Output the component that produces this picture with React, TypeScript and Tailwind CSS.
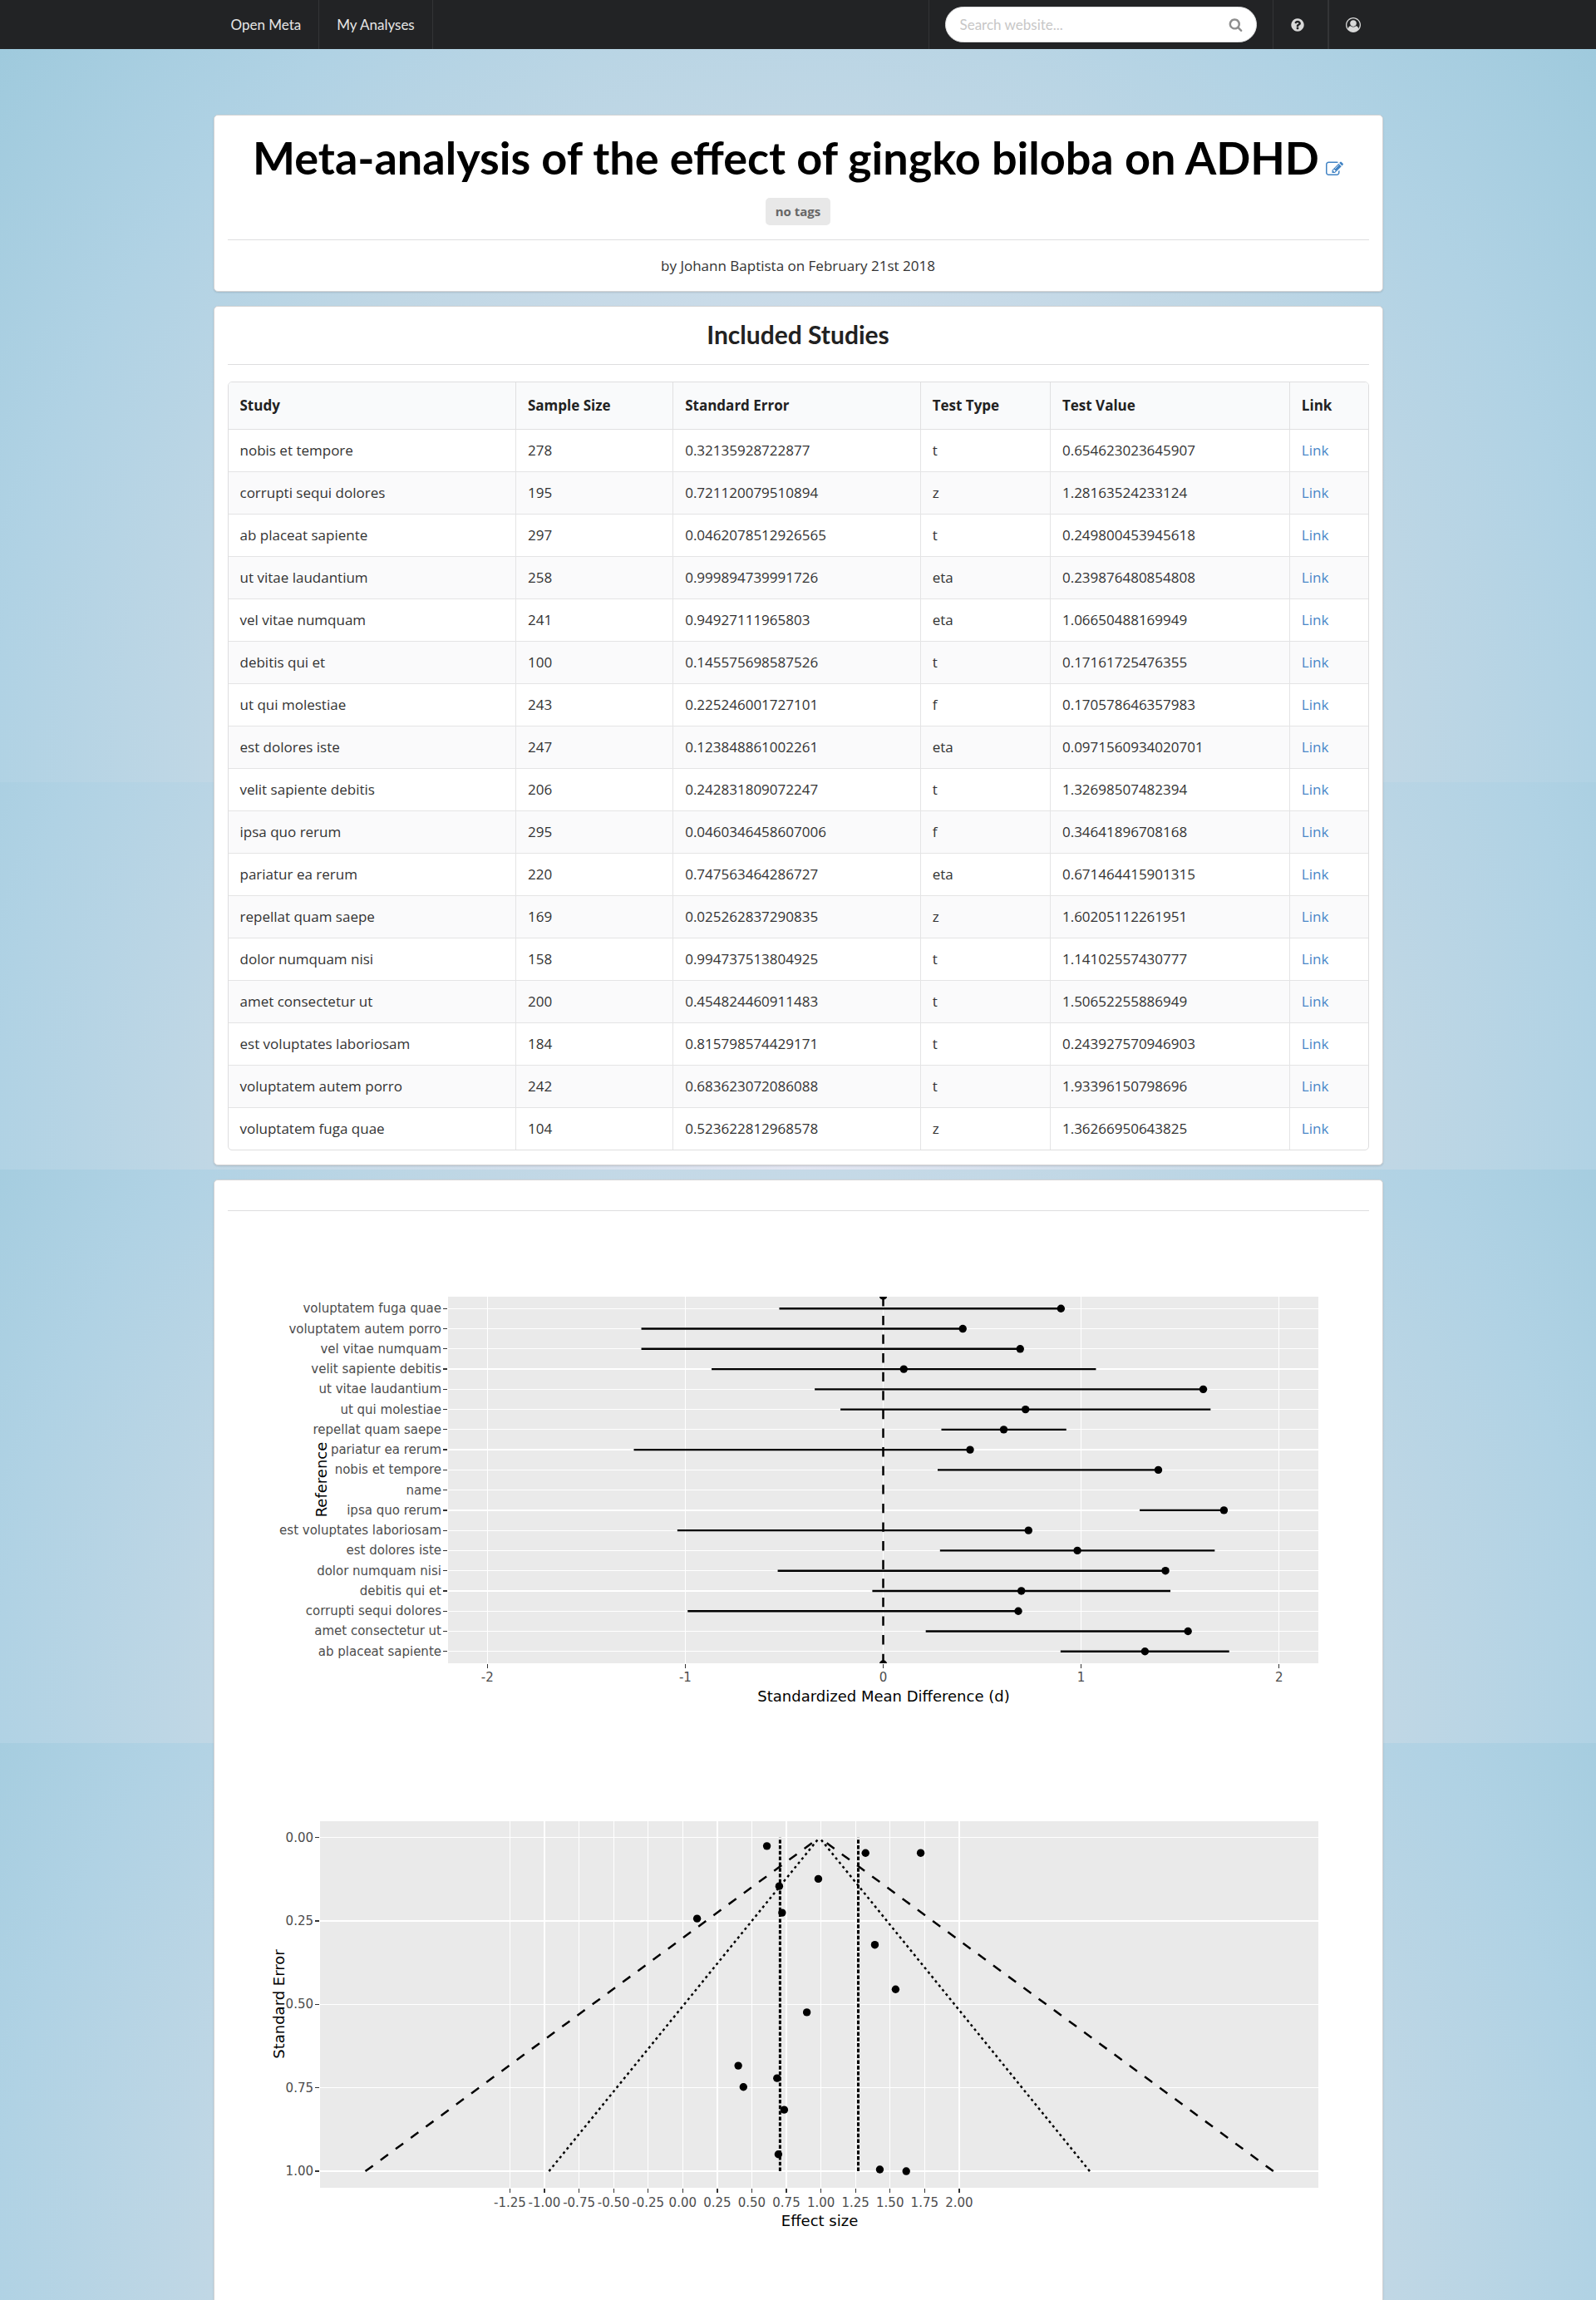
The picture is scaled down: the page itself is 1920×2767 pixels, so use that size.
import React from "react";

type Study = {
  name: string;
  size: number;
  error: string;
  type: string;
  value: string;
  /** Effect size */
  d: number;
  /** Bounds of the confidence interval drawn in the forest plot */
  lo: number;
  hi?: number;
};

const studies: Study[] = [
  { name: "nobis et tempore", size: 278, error: "0.32135928722877", type: "t", value: "0.654623023645907", d: 1.39, lo: 0.275 },
  { name: "corrupti sequi dolores", size: 195, error: "0.721120079510894", type: "z", value: "1.28163524233124", d: 0.6825, lo: -0.988 },
  { name: "ab placeat sapiente", size: 297, error: "0.0462078512926565", type: "t", value: "0.249800453945618", d: 1.3225, lo: 0.896, hi: 1.748 },
  { name: "ut vitae laudantium", size: 258, error: "0.999894739991726", type: "eta", value: "0.239876480854808", d: 1.617, lo: -0.346 },
  { name: "vel vitae numquam", size: 241, error: "0.94927111965803", type: "eta", value: "1.06650488169949", d: 0.692, lo: -1.222 },
  { name: "debitis qui et", size: 100, error: "0.145575698587526", type: "t", value: "0.17161725476355", d: 0.698, lo: -0.055, hi: 1.451 },
  { name: "ut qui molestiae", size: 243, error: "0.225246001727101", type: "f", value: "0.170578646357983", d: 0.719, lo: -0.216, hi: 1.654 },
  { name: "est dolores iste", size: 247, error: "0.123848861002261", type: "eta", value: "0.0971560934020701", d: 0.981, lo: 0.287, hi: 1.675 },
  { name: "velit sapiente debitis", size: 206, error: "0.242831809072247", type: "t", value: "1.32698507482394", d: 0.104, lo: -0.867, hi: 1.075 },
  { name: "ipsa quo rerum", size: 295, error: "0.0460346458607006", type: "f", value: "0.34641896708168", d: 1.7215, lo: 1.296 },
  { name: "pariatur ea rerum", size: 220, error: "0.747563464286727", type: "eta", value: "0.671464415901315", d: 0.439, lo: -1.26 },
  { name: "repellat quam saepe", size: 169, error: "0.025262837290835", type: "z", value: "1.60205112261951", d: 0.609, lo: 0.294, hi: 0.925 },
  { name: "dolor numquam nisi", size: 158, error: "0.994737513804925", type: "t", value: "1.14102557430777", d: 1.426, lo: -0.533 },
  { name: "amet consectetur ut", size: 200, error: "0.454824460911483", type: "t", value: "1.50652255886949", d: 1.54, lo: 0.215 },
  { name: "est voluptates laboriosam", size: 184, error: "0.815798574429171", type: "t", value: "0.243927570946903", d: 0.734, lo: -1.04 },
  { name: "voluptatem autem porro", size: 242, error: "0.683623072086088", type: "t", value: "1.93396150798696", d: 0.402, lo: -1.222 },
  { name: "voluptatem fuga quae", size: 104, error: "0.523622812968578", type: "z", value: "1.36266950643825", d: 0.898, lo: -0.525 },
];

const columns = [
  { label: "Study", width: "w-[25.2%]" },
  { label: "Sample Size", width: "w-[13.8%]" },
  { label: "Standard Error", width: "w-[21.7%]" },
  { label: "Test Type", width: "w-[11.4%]" },
  { label: "Test Value", width: "w-[21%]" },
  { label: "Link", width: "w-[6.9%]" },
];

function Glyph({ d, className }: { d: string; className: string }) {
  return (
    <svg viewBox="0 0 1792 1792" fill="currentColor" aria-hidden="true" className={className}>
      <path d={d} />
    </svg>
  );
}

const EDIT =
  "M888 1184l116-116-152-152-116 116v56h96v96h56zm440-720q-16-16-33 1l-350 350q-17 17-1 33t33-1l350-350q17-17 1-33zm80 594v190q0 119-84.5 203.5t-203.5 84.5h-832q-119 0-203.5-84.5t-84.5-203.5v-832q0-119 84.5-203.5t203.5-84.5h832q63 0 117 25 15 7 18 23 3 17-9 29l-49 49q-14 14-32 8-23-6-45-6h-832q-66 0-113 47t-47 113v832q0 66 47 113t113 47h832q66 0 113-47t47-113v-126q0-13 9-22l64-64q15-15 35-7t20 29zm-96-738l288 288-672 672h-288v-288zm444 132l-92 92-288-288 92-92q28-28 68-28t68 28l152 152q28 28 28 68t-28 68z";
const SEARCH =
  "M1216 832q0-185-131.5-316.5t-316.5-131.5-316.5 131.5-131.5 316.5 131.5 316.5 316.5 131.5 316.5-131.5 131.5-316.5zm512 832q0 52-38 90t-90 38q-54 0-90-38l-343-342q-179 124-399 124-143 0-273.5-55.5t-225-150-150-225-55.5-273.5 55.5-273.5 150-225 225-150 273.5-55.5 273.5 55.5 225 150 150 225 55.5 273.5q0 220-124 399l343 343q37 37 37 90z";
const HELP =
  "M1024 1376v-192q0-14-9-23t-23-9h-192q-14 0-23 9t-9 23v192q0 14 9 23t23 9h192q14 0 23-9t9-23zm256-672q0-88-55.5-163t-138.5-116-170-41q-243 0-371 213-15 24 8 42l132 100q7 6 19 6 16 0 25-12 53-68 86-92 34-24 86-24 48 0 85.5 26t37.5 59q0 38-20 61t-68 45q-63 28-115.5 86.5t-52.5 125.5v36q0 14 9 23t23 9h192q14 0 23-9t9-23q0-19 21.5-49.5t54.5-49.5q32-18 49-28.5t46-35 44.5-48 28-60.5 12.5-81zm384 192q0 209-103 385.5t-279.5 279.5-385.5 103-385.5-103-279.5-279.5-103-385.5 103-385.5 279.5-279.5 385.5-103 385.5 103 279.5 279.5 103 385.5z";
const USER =
  "M896 0q182 0 348 71t286 191 191 286 71 348q0 181-70.5 347t-190.5 286-286 191.5-349 71.5-349-71-285.5-191.5-190.5-286-71-347.5 71-348 191-286 286-191 348-71zm619 1351q149-205 149-455 0-156-61-298t-164-245-245-164-298-61-298 61-245 164-164 245-61 298q0 250 149 455 66-327 306-327 131 128 313 128t313-128q240 0 306 327zm-235-647q0-159-112.5-271.5t-271.5-112.5-271.5 112.5-112.5 271.5 112.5 271.5 271.5 112.5 271.5-112.5 112.5-271.5z";

function NavBar() {
  return (
    <nav className="bg-[#222325] font-[Lato,sans-serif] text-[17px] text-[#e6e6e6]">
      <div className="mx-auto flex h-[59px] w-full max-w-[1407px] items-stretch">
        <a href="#" className="flex items-center border-r border-[#333436] px-[21px]">
          Open Meta
        </a>
        <a href="#" className="flex items-center border-r border-[#333436] px-[21px]">
          My Analyses
        </a>
        <form role="search" className="ml-auto flex items-center border-x border-[#333436] px-[19px]">
          <div className="flex h-[43px] w-[375px] items-center rounded-full border border-[#dededf] bg-white pr-4 pl-[17px]">
            <input
              type="search"
              aria-label="Search website"
              placeholder="Search website..."
              className="h-8 min-w-0 flex-1 bg-transparent text-[#222] outline-none placeholder:text-[#c7c7c7]"
            />
            <Glyph d={SEARCH} className="size-[17px] text-[#8e8e8e]" />
          </div>
        </form>
        <button type="button" aria-label="Help" className="flex w-[66px] items-center border-r border-[#333436] pl-5 text-[#d9d9d9]">
          <Glyph d={HELP} className="size-[18px]" />
        </button>
        <button type="button" aria-label="Account" className="flex w-[66px] items-center border-l border-[#333436] pl-5 text-[#d9d9d9]">
          <Glyph d={USER} className="size-[18px]" />
        </button>
      </div>
    </nav>
  );
}

function Card({ className, children }: { className: string; children: React.ReactNode }) {
  return (
    <section className={"border border-[#d4d4d5] bg-white px-4 pt-4 shadow-[0_1px_2px_rgba(34,36,38,0.15)] " + className}>
      {children}
    </section>
  );
}

const axisText = "fill-[#4d4d4d] text-[15px]";
const axisTitle = "fill-black text-[18px]";

// Rows run from the last name to the first, spaces ignored.
const forestRows = (() => {
  const key = (name: string) => name.replace(/ /g, "");
  const rows: { name: string; study?: Study }[] = studies.map((s) => ({ name: s.name, study: s }));
  rows.push({ name: "name" });
  return rows.sort((a, b) => (key(a.name) < key(b.name) ? 1 : -1));
})();

function ForestPlot() {
  const left = 265;
  const right = 1312;
  const top = 86;
  const bottom = 527;
  const x = (v: number) => 788.5 + v * 238.1;
  const y = (i: number) => 100.3 + i * 24.26;
  return (
    <svg viewBox="0 0 1373 631" role="img" aria-label="Forest plot" className="block w-full font-['DejaVu_Sans',sans-serif]">
      <defs>
        <clipPath id="forest-panel">
          <rect x={left} y={top} width={right - left} height={bottom - top} />
        </clipPath>
      </defs>
      <rect x={left} y={top} width={right - left} height={bottom - top} fill="#eaeaea" />
      {[-2, -1, 0, 1, 2].map((v) => (
        <g key={v}>
          <g strokeWidth={1.25} shapeRendering="crispEdges">
            <line x1={x(v)} x2={x(v)} y1={top} y2={bottom} stroke="#fff" />
            <line x1={x(v)} x2={x(v)} y1={bottom + 1} y2={bottom + 6} stroke="#333" />
          </g>
          <text x={x(v)} y={549} textAnchor="middle" className={axisText}>
            {v}
          </text>
        </g>
      ))}
      {forestRows.map(({ name }, i) => (
        <g key={name}>
          <g strokeWidth={1.25} shapeRendering="crispEdges">
            <line x1={left} x2={right} y1={y(i)} y2={y(i)} stroke="#fff" />
            <line x1={left - 6} x2={left - 1} y1={y(i)} y2={y(i)} stroke="#333" />
          </g>
          <text x={257} y={y(i) + 5} textAnchor="end" className={axisText}>
            {name}
          </text>
        </g>
      ))}
      <g clipPath="url(#forest-panel)">
        <line x1={x(0)} x2={x(0)} y1={bottom} y2={top} stroke="#000" strokeWidth={2.5} strokeDasharray="11.3 11.3" />
        <circle cx={x(0)} cy={top - 1} r={4.7} />
        <circle cx={x(0)} cy={bottom + 1} r={4.7} />
        {forestRows.map(({ name, study }, i) =>
          study ? (
            <g key={name}>
              <line x1={x(study.lo)} x2={x(study.hi ?? study.d)} y1={y(i)} y2={y(i)} stroke="#000" strokeWidth={2.4} />
              <circle cx={x(study.d)} cy={y(i)} r={4.7} />
            </g>
          ) : null,
        )}
      </g>
      <text x={789} y={573} textAnchor="middle" className={axisTitle}>
        Standardized Mean Difference (d)
      </text>
      <text transform="translate(119 306) rotate(-90)" textAnchor="middle" className={axisTitle}>
        Reference
      </text>
    </svg>
  );
}

const effectTicks = Array.from({ length: 14 }, (_, i) => -1.25 + i * 0.25);
const errorTicks = [0, 0.25, 0.5, 0.75, 1];

function FunnelPlot() {
  const left = 111;
  const right = 1312;
  const top = 86;
  const bottom = 527;
  const x = (v: number) => 547.3 + v * 166.3;
  const y = (v: number) => 105.7 + v * 401.4;
  const mean = 0.9885;
  return (
    <svg viewBox="0 0 1373 631" role="img" aria-label="Funnel plot" className="block w-full font-['DejaVu_Sans',sans-serif]">
      <rect x={left} y={top} width={right - left} height={bottom - top} fill="#eaeaea" />
      {effectTicks.map((v) => (
        <g key={v}>
          <g strokeWidth={1.25} shapeRendering="crispEdges">
            <line x1={x(v)} x2={x(v)} y1={top} y2={bottom} stroke="#fff" />
            <line x1={x(v)} x2={x(v)} y1={bottom + 1} y2={bottom + 6} stroke="#333" />
          </g>
          <text x={x(v)} y={550} textAnchor="middle" className={axisText}>
            {v.toFixed(2)}
          </text>
        </g>
      ))}
      {errorTicks.map((v) => (
        <g key={v}>
          <g strokeWidth={1.25} shapeRendering="crispEdges">
            <line x1={left} x2={right} y1={y(v)} y2={y(v)} stroke="#fff" />
            <line x1={left - 6} x2={left - 1} y1={y(v)} y2={y(v)} stroke="#333" />
          </g>
          <text x={103} y={y(v) + 5} textAnchor="end" className={axisText}>
            {v.toFixed(2)}
          </text>
        </g>
      ))}
      <g stroke="#000" strokeWidth={2.5} fill="none">
        {[-1, 1].map((side) => (
          <g key={side}>
            <line x1={x(mean + side * 3.284)} y1={y(1)} x2={x(mean)} y2={y(0)} strokeDasharray="11.3 11.3" />
            <line x1={x(mean + side * 1.956)} y1={y(1)} x2={x(mean)} y2={y(0)} strokeDasharray="3 3.8" />
          </g>
        ))}
        {[0.704, 1.27].map((v) => (
          <line key={v} x1={x(v)} x2={x(v)} y1={y(1)} y2={y(0)} strokeWidth={3} strokeDasharray="4.5 2.3" />
        ))}
      </g>
      {studies.map((s) => (
        <circle key={s.name} cx={x(s.d)} cy={y(Number(s.error))} r={4.7} />
      ))}
      <text x={712} y={573} textAnchor="middle" className={axisTitle}>
        Effect size
      </text>
      <text transform="translate(68 306) rotate(-90)" textAnchor="middle" className={axisTitle}>
        Standard Error
      </text>
    </svg>
  );
}

function StudyTable() {
  const cell = "border-b border-[#e4e4e5] px-[14px] group-last:border-b-0";
  const divided = cell + " border-l";
  return (
    <div className="mt-5 overflow-hidden rounded-[5px] border border-[#dededf]">
      <table className="w-full table-fixed border-separate border-spacing-0 text-left">
        <thead>
          <tr className="bg-[#f9fafb]">
            {columns.map((c, i) => (
              <th
                key={c.label}
                scope="col"
                className={c.width + " h-[57px] border-b border-[#e0e0e1] px-[14px] font-bold " + (i > 0 ? "border-l" : "")}
              >
                {c.label}
              </th>
            ))}
          </tr>
        </thead>
        <tbody>
          {studies.map((s) => (
            <tr key={s.name} className="group h-[51px] text-[#333] last:h-[50px] even:bg-[#fafafb]">
              <td className={cell}>{s.name}</td>
              <td className={divided}>{s.size}</td>
              <td className={divided}>{s.error}</td>
              <td className={divided}>{s.type}</td>
              <td className={divided}>{s.value}</td>
              <td className={divided}>
                <a href="#" className="text-[#4a88c8]">
                  Link
                </a>
              </td>
            </tr>
          ))}
        </tbody>
      </table>
    </div>
  );
}

export default function App() {
  return (
    <div className="flex min-h-screen flex-col bg-[#b0d2e4] font-['Open_Sans',sans-serif] text-[17px] leading-6 text-[#222] [--sky:radial-gradient(71%_1527px_at_50%_100%,#e3e6f2_0%,#c0d7e5_52%,#b0d2e4_71%,#9fcadd_91%,#97c6da_100%)] bg-[image:var(--sky),var(--sky),var(--sky),var(--sky)] bg-no-repeat bg-[position:0_0,0_941px,0_1407px,0_2097px] bg-[length:100%_941px,100%_466px,100%_690px,100%_670px]">
      <NavBar />
      <main className="mx-auto flex w-full max-w-[1407px] flex-1 flex-col gap-[17px] pt-[79px]">
        <Card className="rounded-[5px] pb-[18px] text-center">
          <div className="flex items-end justify-center gap-2">
            <h1 className="font-[Lato,sans-serif] text-[54px] leading-[70px] font-bold text-black">
              Meta-analysis of the effect of gingko biloba on ADHD
            </h1>
            <button type="button" aria-label="Edit title" className="mb-[11px] text-[#4183c4]">
              <Glyph d={EDIT} className="size-[21px]" />
            </button>
          </div>
          <div className="mt-[13px] flex justify-center">
            <span className="rounded-[5px] bg-[#e8e8e8] px-3 text-[15px] leading-[33px] font-bold text-[#666]">
              no tags
            </span>
          </div>
          <hr className="mt-[17px] border-[#dededf]" />
          <p className="mt-[19px] text-[#333]">by Johann Baptista on February 21st 2018</p>
        </Card>
        <Card className="rounded-[5px] pb-[17px]">
          <h2 className="text-center font-[Lato,sans-serif] text-[30px] leading-[34px] font-bold">Included Studies</h2>
          <hr className="mt-[19px] border-[#dededf]" />
          <StudyTable />
        </Card>
        <Card className="flex-1 rounded-t-[5px] border-b-0">
          <hr className="mt-5 mb-[17px] border-[#dededf]" />
          <ForestPlot />
          <FunnelPlot />
        </Card>
      </main>
    </div>
  );
}
